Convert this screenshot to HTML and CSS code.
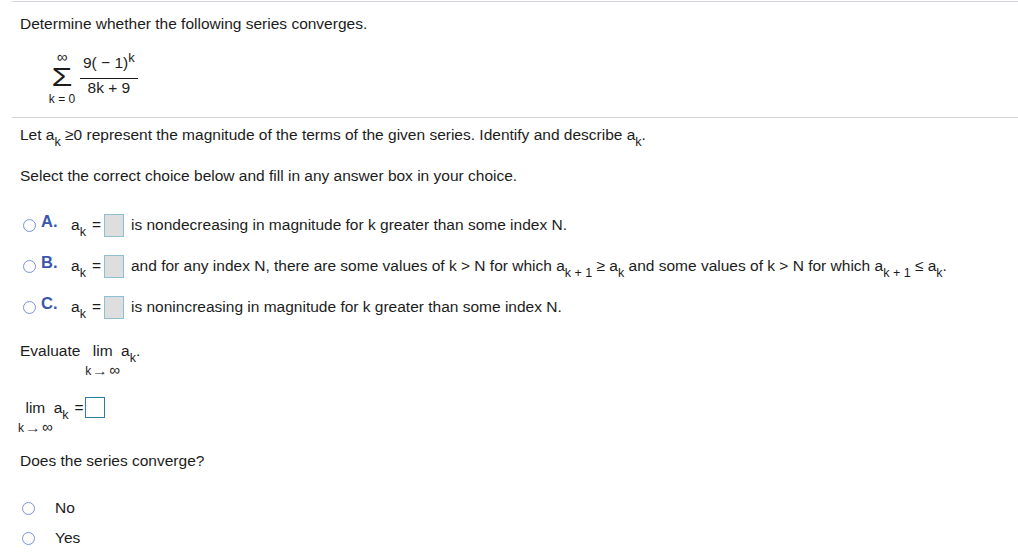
FILE: index.html
```html
<!DOCTYPE html>
<html>
<head>
<meta charset="utf-8">
<link rel="stylesheet" href="styles.css">
</head>
<body>
<div class="page">
  <div class="section first">
    <p class="title">Determine whether the following series converges.</p>
    <div class="series">
      <div class="sigma">
        <span class="sig-top">∞</span>
        <span class="sig">Σ</span>
        <span class="sig-bot">k = 0</span>
      </div>
      <div class="frac">
        <span class="num">9( − 1)<sup>k</sup></span>
        <span class="den">8k + 9</span>
      </div>
    </div>
  </div>
  <div class="section second">
    <p class="let">Let a<sub>k</sub> ≥0 represent the magnitude of the terms of the given series. Identify and describe a<sub>k</sub>.</p>
    <p class="select">Select the correct choice below and fill in any answer box in your choice.</p>

    <div class="choices">
      <div class="choice">
        <span class="radio"></span>
        <span class="letter">A.</span>
        <span class="ak">a<sub>k</sub></span>
        <span class="eq">=</span>
        <span class="box"></span>
        <span class="ctext">is nondecreasing in magnitude for k greater than some index N.</span>
      </div>
      <div class="choice">
        <span class="radio"></span>
        <span class="letter">B.</span>
        <span class="ak">a<sub>k</sub></span>
        <span class="eq">=</span>
        <span class="box"></span>
        <span class="ctext">and for any index N, there are some values of k &gt; N for which a<sub>k + 1</sub> ≥ a<sub>k</sub> and some values of k &gt; N for which a<sub>k + 1</sub> ≤ a<sub>k</sub>.</span>
      </div>
      <div class="choice">
        <span class="radio"></span>
        <span class="letter">C.</span>
        <span class="ak">a<sub>k</sub></span>
        <span class="eq">=</span>
        <span class="box"></span>
        <span class="ctext">is nonincreasing in magnitude for k greater than some index N.</span>
      </div>
    </div>

    <div class="evaluate">
      <span class="ev-word">Evaluate</span>
      <span class="limblock"><span class="lim">lim</span><span class="limsub">k<span class="arrow">→</span><span class="inf">∞</span></span></span>
      <span class="ev-ak">a<sub>k</sub>.</span>
    </div>

    <div class="limrow">
      <span class="limblock2"><span class="lim">lim</span><span class="limsub">k<span class="arrow">→</span><span class="inf">∞</span></span></span>
      <span class="lr-ak">a<sub>k</sub></span>
      <span class="eq2">=</span>
      <span class="ansbox"></span>
    </div>

    <p class="does">Does the series converge?</p>

    <div class="yn">
      <div class="ynrow"><span class="radio"></span><span class="ynlabel">No</span></div>
      <div class="ynrow"><span class="radio"></span><span class="ynlabel">Yes</span></div>
    </div>
  </div>
</div>
</body>
</html>
```

FILE: styles.css
```css
html, body {
  margin: 0;
  padding: 0;
  background: #ffffff;
}
body {
  font-family: "Liberation Sans", Arial, sans-serif;
  font-size: 15.5px;
  color: #1c1c1c;
}
p { margin: 0; }
.page {
  padding-top: 1px;
  margin-left: 12px;
}
.section {
  border-top: 1px solid #d4d3dc;
  padding-left: 8px;
}
.first {
  height: 115px;
}
.title {
  margin-top: 13px;
  line-height: 17px;
}
.series {
  display: flex;
  align-items: flex-start;
  margin-top: 20px;
  margin-left: 27px;
}
.sigma {
  display: flex;
  flex-direction: column;
  align-items: center;
  width: 30px;
}
.sig-top {
  font-size: 15px;
  line-height: 10px;
  height: 10px;
}
.sig {
  display: block;
  font-size: 26px;
  line-height: 22px;
  height: 22px;
  margin-top: 4px;
  transform: scaleX(1.3);
}
.sig-bot {
  font-size: 12px;
  line-height: 12px;
  margin-top: 5px;
}
.frac {
  display: flex;
  flex-direction: column;
  align-items: center;
  margin-left: 3px;
  margin-top: 2px;
}
.num {
  line-height: 17px;
  padding: 0 3px 7px;
  border-bottom: 1px solid #1c1c1c;
}
.num sup {
  font-size: 13px;
  vertical-align: 6px;
  line-height: 0;
}
.den {
  line-height: 17px;
  padding-top: 0;
}
.let {
  margin-top: 8px;
  line-height: 17px;
}
sub {
  font-size: 12.5px;
  vertical-align: -6px;
  line-height: 0;
}
.select {
  margin-top: 24px;
  line-height: 17px;
}
.choices {
  margin-top: 29px;
}
.choice {
  display: flex;
  align-items: center;
  height: 24px;
  margin-bottom: 17px;
  margin-left: 3px;
}
.radio {
  width: 11px;
  height: 11px;
  border: 1.5px solid #7d93d8;
  border-radius: 50%;
  background: radial-gradient(circle at 50% 40%, #ffffff 55%, #eef1fb 100%);
  flex: none;
}
.letter {
  font-weight: bold;
  font-size: 16.5px;
  color: #3b57ad;
  margin-left: 5px;
  width: 30px;
  position: relative;
  top: -4px;
}
.ak {
  margin-left: 0;
  width: 21px;
}
.eq {
  width: 12px;
}
.box {
  width: 18px;
  height: 21px;
  background: #dedede;
  border: 1px solid #8cc0d2;
  flex: none;
}
.ctext {
  margin-left: 7px;
  white-space: nowrap;
}
.evaluate {
  display: flex;
  align-items: flex-start;
  margin-top: 23px;
  height: 34px;
}
.ev-word {
  line-height: 17px;
}
.limblock, .limblock2 {
  display: inline-flex;
  flex-direction: column;
  align-items: center;
}
.limblock {
  margin-left: 5px;
}
.lim {
  line-height: 17px;
}
.limsub {
  font-size: 12px;
  line-height: 12px;
  margin-top: 5px;
  white-space: nowrap;
}
.arrow {
  display: inline-block;
  transform: scaleX(1.35);
  margin: 0 3px;
}
.inf {
  font-size: 15px;
}
.ev-ak {
  line-height: 17px;
  margin-left: 1px;
}
.limrow {
  display: flex;
  align-items: flex-start;
  margin-top: 22px;
  height: 54px;
  margin-left: -2px;
}
.limrow .lim {
  margin-top: 1px;
}
.lr-ak {
  margin-top: 1px;
  margin-left: 1px;
  line-height: 17px;
}
.eq2 {
  margin-top: 1px;
  margin-left: 6px;
  line-height: 17px;
}
.ansbox {
  width: 18px;
  height: 19px;
  border: 1.5px solid #2e7d9b;
  margin-left: 1px;
  margin-top: -1px;
  flex: none;
}
.does {
  line-height: 17px;
}
.yn {
  margin-top: 24px;
}
.ynrow {
  display: flex;
  align-items: center;
  height: 30px;
  margin-left: 2px;
}
.ynlabel {
  margin-left: 20px;
}
```
